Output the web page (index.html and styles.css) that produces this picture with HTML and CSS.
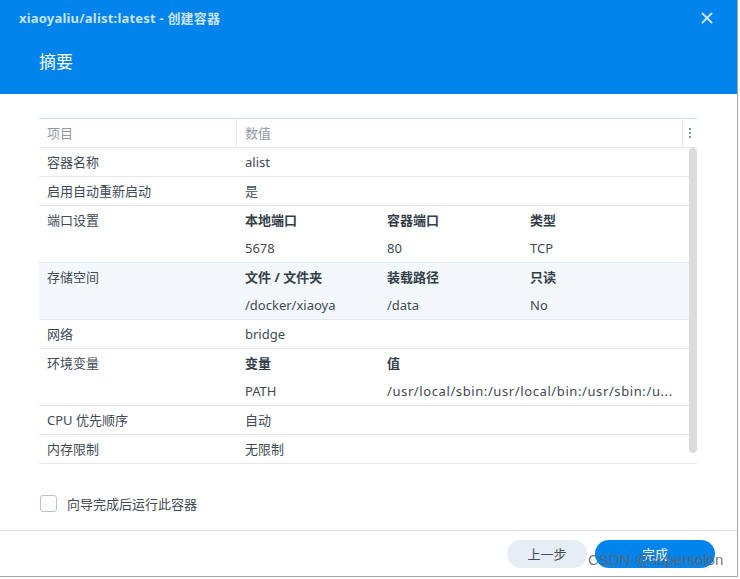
FILE: index.html
```html
<!DOCTYPE html>
<html lang="zh-CN">

<head>
    <meta charset="UTF-8">
    <title>xiaoyaliu/alist:latest - 创建容器</title>
    <meta name="viewport" content="width=device-width,initial-scale=1">
    <link rel="stylesheet" href="styles.css">
</head>

<body>
    <div class="dialog">
        <div class="header">
            <div class="titlebar">
                <span class="title">xiaoyaliu/alist:latest - 创建容器</span>
                <svg class="close" width="12" height="12" viewBox="0 0 12 12">
                    <path d="M1.5 1.5 L10.5 10.5 M10.5 1.5 L1.5 10.5" stroke="#c8e2f8" stroke-width="2" stroke-linecap="round" />
                </svg>
            </div>
            <h2>摘要</h2>
        </div>

        <div class="body">
            <div class="grid">
                <div class="grid-head">
                    <div class="label">项目</div>
                    <div class="value">数值</div>
                    <div class="more"><i></i><i></i><i></i></div>
                </div>
                <div class="grid-body">
                    <div class="row">
                        <div class="label">容器名称</div>
                        <div class="value">alist</div>
                    </div>
                    <div class="row">
                        <div class="label">启用自动重新启动</div>
                        <div class="value">是</div>
                    </div>
                    <div class="row">
                        <div class="label">端口设置</div>
                        <div class="value sub">
                            <b>本地端口</b><b>容器端口</b><b>类型</b>
                            <span>5678</span><span>80</span><span>TCP</span>
                        </div>
                    </div>
                    <div class="row active">
                        <div class="label">存储空间</div>
                        <div class="value sub">
                            <b>文件 / 文件夹</b><b>装载路径</b><b>只读</b>
                            <span>/docker/xiaoya</span><span>/data</span><span>No</span>
                        </div>
                    </div>
                    <div class="row">
                        <div class="label">网络</div>
                        <div class="value">bridge</div>
                    </div>
                    <div class="row">
                        <div class="label">环境变量</div>
                        <div class="value sub env">
                            <b>变量</b><b>值</b>
                            <span>PATH</span><span class="nowrap">/usr/local/sbin:/usr/local/bin:/usr/sbin:/u...</span>
                        </div>
                    </div>
                    <div class="row">
                        <div class="label">CPU 优先顺序</div>
                        <div class="value">自动</div>
                    </div>
                    <div class="row">
                        <div class="label">内存限制</div>
                        <div class="value">无限制</div>
                    </div>
                    <div class="scroll-thumb"></div>
                </div>
            </div>

            <label class="check">
                <span class="box"></span>
                向导完成后运行此容器
            </label>
        </div>

        <div class="footer">
            <button class="btn btn-prev" type="button">上一步</button>
            <button class="btn btn-done" type="button">完成</button>
        </div>
    </div>
    <div class="watermark">CSDN @supersolon</div>
</body>

</html>
```

FILE: styles.css
```css
body {
    margin: 0;
    background: #fff;
    font-family: 'Noto Sans', 'Noto Sans CJK SC', sans-serif;
    font-size: 13px;
    color: #414b55;
}

.dialog {
    width: 737px;
    height: 576px;
    border-right: 1px solid #a7a7a7;
    border-bottom: 1px solid #a7a7a7;
    display: flex;
    flex-direction: column;
    background: #fff;
}

.header {
    background: #0083ea;
    height: 94px;
    box-sizing: border-box;
    padding: 0 24px 0 19px;
}

.titlebar {
    display: flex;
    align-items: center;
    justify-content: space-between;
    height: 35px;
}

.title {
    font-weight: bold;
    font-size: 13px;
    color: #c8e2f8;
    letter-spacing: 0.2px;
}

h2 {
    margin: 15px 0 0;
    padding-left: 20px;
    font-size: 17px;
    font-weight: normal;
    color: #fff;
    line-height: 24px;
}

.body {
    flex: 1;
    padding: 24px 40px 0 39px;
}

.grid-head {
    display: flex;
    height: 28px;
    line-height: 28px;
    border-top: 1px solid #d3dde5;
    border-bottom: 1px solid #e3e9ef;
    color: #8f98a1;
}

.label {
    width: 189px;
    padding-left: 8px;
    flex-shrink: 0;
}

.grid-head .value {
    flex: 1;
    padding-left: 8px;
    border-left: 1px solid #e3e9ef;
}

.more {
    width: 14px;
    border-left: 1px solid #e3e9ef;
    display: flex;
    flex-direction: column;
    align-items: center;
    justify-content: center;
    gap: 2px;
}

.more i {
    display: block;
    width: 2px;
    height: 2px;
    background: #8a949c;
}

.grid-body {
    position: relative;
}

.row {
    display: flex;
    border-bottom: 1px solid #e3e9ef;
    line-height: 28px;
}

.row.active {
    background: #f3f8fc;
}

.row .value {
    flex: 1;
    padding-left: 9px;
    min-width: 0;
}

.sub {
    display: grid;
    grid-template-columns: 142px 143px 1fr;
}

.sub.env {
    grid-template-columns: 142px 1fr;
}

.sub b {
    color: #343e48;
}

.nowrap {
    white-space: nowrap;
    letter-spacing: 0.6px;
}

.scroll-thumb {
    position: absolute;
    right: 0;
    top: 0;
    width: 8px;
    height: 305px;
    border-radius: 4px;
    background: #dcdcdc;
}

.check {
    display: flex;
    align-items: center;
    gap: 10px;
    margin-top: 30px;
    margin-left: 1px;
    color: #414b55;
}

.box {
    width: 15px;
    height: 15px;
    border: 1px solid #b9c2cb;
    border-radius: 3px;
    background: #fff;
}

.footer {
    height: 45px;
    border-top: 1px solid #dfe6ec;
    display: flex;
    align-items: center;
    justify-content: flex-end;
    gap: 8px;
    padding-right: 22px;
}

.btn {
    height: 28px;
    border: none;
    border-radius: 14px;
    font-family: inherit;
    font-size: 13px;
    cursor: pointer;
}

.btn-prev {
    width: 80px;
    background: #e6edf4;
    color: #414b55;
}

.btn-done {
    width: 120px;
    background: #0083ea;
    color: #fff;
}

.watermark {
    position: absolute;
    left: 588px;
    top: 551px;
    font-family: 'Liberation Sans', Arial, sans-serif;
    font-size: 15px;
    color: rgba(100, 100, 100, 0.9);
}
```
